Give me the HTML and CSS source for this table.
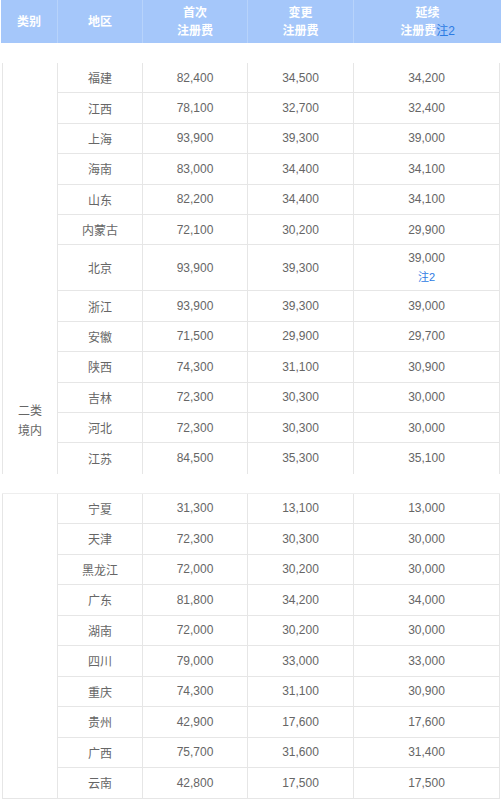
FILE: index.html
```html
<!DOCTYPE html>
<html lang="zh">
<head>
<meta charset="utf-8">
<title>注册费</title>
<link rel="stylesheet" href="styles.css">
</head>
<body>
<div class="page">
  <div class="head">
    <div class="hc"><span>类别</span></div>
    <div class="hc"><span>地区</span></div>
    <div class="hc"><span>首次<br>注册费</span></div>
    <div class="hc"><span>变更<br>注册费</span></div>
    <div class="hc"><span>延续<br>注册费<span class="note">注2</span></span></div>
  </div>

  <div class="sec sec1">
    <div class="cat cat1"><span>二类<br>境内</span></div>
    <div class="c">福建</div><div class="c">82,400</div><div class="c">34,500</div><div class="c">34,200</div>
    <div class="c">江西</div><div class="c">78,100</div><div class="c">32,700</div><div class="c">32,400</div>
    <div class="c">上海</div><div class="c">93,900</div><div class="c">39,300</div><div class="c">39,000</div>
    <div class="c">海南</div><div class="c">83,000</div><div class="c">34,400</div><div class="c">34,100</div>
    <div class="c">山东</div><div class="c">82,200</div><div class="c">34,400</div><div class="c">34,100</div>
    <div class="c">内蒙古</div><div class="c">72,100</div><div class="c">30,200</div><div class="c">29,900</div>
    <div class="c tall">北京</div><div class="c tall">93,900</div><div class="c tall">39,300</div><div class="c tall two">39,000<span class="note">注2</span></div>
    <div class="c">浙江</div><div class="c">93,900</div><div class="c">39,300</div><div class="c">39,000</div>
    <div class="c">安徽</div><div class="c">71,500</div><div class="c">29,900</div><div class="c">29,700</div>
    <div class="c">陕西</div><div class="c">74,300</div><div class="c">31,100</div><div class="c">30,900</div>
    <div class="c">吉林</div><div class="c">72,300</div><div class="c">30,300</div><div class="c">30,000</div>
    <div class="c">河北</div><div class="c">72,300</div><div class="c">30,300</div><div class="c">30,000</div>
    <div class="c last">江苏</div><div class="c last">84,500</div><div class="c last">35,300</div><div class="c last">35,100</div>
  </div>

  <div class="sec sec2">
    <div class="cat cat2"></div>
    <div class="c">宁夏</div><div class="c">31,300</div><div class="c">13,100</div><div class="c">13,000</div>
    <div class="c">天津</div><div class="c">72,300</div><div class="c">30,300</div><div class="c">30,000</div>
    <div class="c">黑龙江</div><div class="c">72,000</div><div class="c">30,200</div><div class="c">30,000</div>
    <div class="c">广东</div><div class="c">81,800</div><div class="c">34,200</div><div class="c">34,000</div>
    <div class="c">湖南</div><div class="c">72,000</div><div class="c">30,200</div><div class="c">30,000</div>
    <div class="c">四川</div><div class="c">79,000</div><div class="c">33,000</div><div class="c">33,000</div>
    <div class="c">重庆</div><div class="c">74,300</div><div class="c">31,100</div><div class="c">30,900</div>
    <div class="c">贵州</div><div class="c">42,900</div><div class="c">17,600</div><div class="c">17,600</div>
    <div class="c">广西</div><div class="c">75,700</div><div class="c">31,600</div><div class="c">31,400</div>
    <div class="c">云南</div><div class="c">42,800</div><div class="c">17,500</div><div class="c">17,500</div>
  </div>
</div>
</body>
</html>
```

FILE: styles.css
```css
html, body {
  margin: 0;
  padding: 0;
  background: #ffffff;
}
body {
  font-family: "Liberation Sans", "Noto Sans CJK SC", sans-serif;
  font-size: 12px;
  color: #666666;
}
.page {
  width: 503px;
}
.head {
  margin-left: 1px;
  width: 500px;
  height: 43px;
  display: grid;
  grid-template-columns: 57px 85px 105px 106px 147px;
  background: #a5c7fa;
}
.hc {
  display: flex;
  align-items: center;
  justify-content: center;
  text-align: center;
  color: #ffffff;
  font-weight: bold;
  line-height: 18px;
  border-right: 1px solid #b7d3fb;
}
.hc:last-child {
  border-right: none;
}
.hc .note {
  color: #2d7be3;
  font-weight: normal;
}
.sec {
  margin-left: 2px;
  width: 498px;
  display: grid;
  grid-template-columns: 56px 85px 105px 106px 146px;
}
.sec1 {
  margin-top: 20px;
  grid-template-rows: repeat(6, 30.4px) 46px repeat(6, 30.4px);
}
.sec2 {
  margin-top: 19px;
  grid-template-rows: repeat(10, 30.5px);
  border-top: 1px solid #eeeeee;
}
.cat {
  grid-column: 1;
  border-left: 1px solid #e6e6e6;
  border-right: 1px solid #e6e6e6;
  display: flex;
  align-items: flex-end;
  justify-content: center;
  text-align: center;
}
.cat1 {
  grid-row: 1 / span 13;
  padding-bottom: 33px;
  line-height: 20px;
}
.cat2 {
  grid-row: 1 / span 10;
  border-bottom: 1px solid #e6e6e6;
}
.c {
  display: flex;
  align-items: center;
  justify-content: center;
  text-align: center;
  border-right: 1px solid #e6e6e6;
  border-bottom: 1px solid #e6e6e6;
  box-sizing: border-box;
}
.sec1 .c.last {
  border-bottom: none;
}
.c.two {
  flex-direction: column;
  line-height: 19px;
}
.c .note {
  color: #2d7be3;
  font-size: 11px;
}
```
